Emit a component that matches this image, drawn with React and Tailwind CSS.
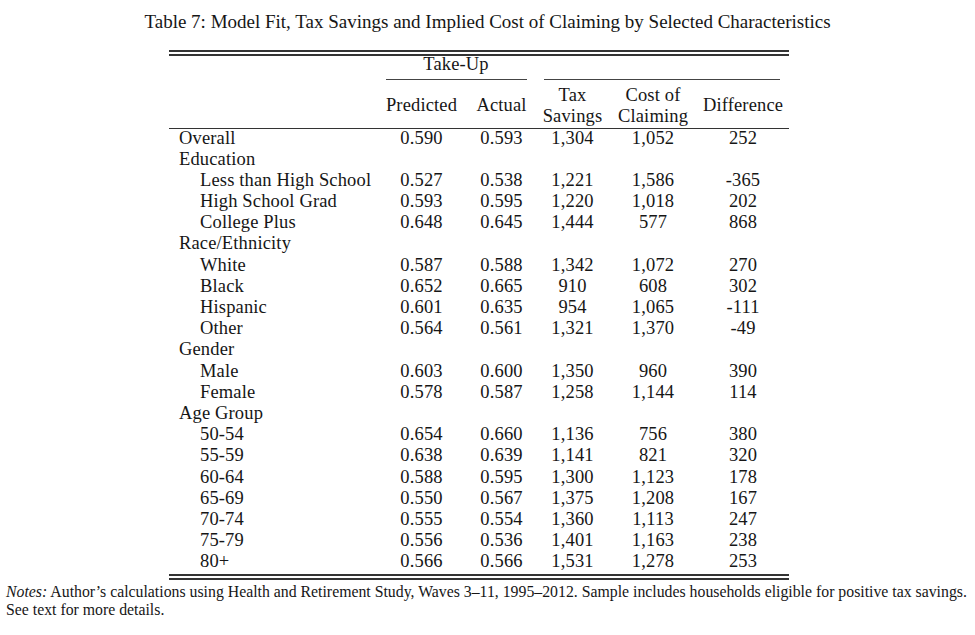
const rows = [
  { label: 'Overall', v: ['0.590', '0.593', '1,304', '1,052', '252'] },
  { label: 'Education' },
  { label: 'Less than High School', sub: true, v: ['0.527', '0.538', '1,221', '1,586', '-365'] },
  { label: 'High School Grad', sub: true, v: ['0.593', '0.595', '1,220', '1,018', '202'] },
  { label: 'College Plus', sub: true, v: ['0.648', '0.645', '1,444', '577', '868'] },
  { label: 'Race/Ethnicity' },
  { label: 'White', sub: true, v: ['0.587', '0.588', '1,342', '1,072', '270'] },
  { label: 'Black', sub: true, v: ['0.652', '0.665', '910', '608', '302'] },
  { label: 'Hispanic', sub: true, v: ['0.601', '0.635', '954', '1,065', '-111'] },
  { label: 'Other', sub: true, v: ['0.564', '0.561', '1,321', '1,370', '-49'] },
  { label: 'Gender' },
  { label: 'Male', sub: true, v: ['0.603', '0.600', '1,350', '960', '390'] },
  { label: 'Female', sub: true, v: ['0.578', '0.587', '1,258', '1,144', '114'] },
  { label: 'Age Group' },
  { label: '50-54', sub: true, v: ['0.654', '0.660', '1,136', '756', '380'] },
  { label: '55-59', sub: true, v: ['0.638', '0.639', '1,141', '821', '320'] },
  { label: '60-64', sub: true, v: ['0.588', '0.595', '1,300', '1,123', '178'] },
  { label: '65-69', sub: true, v: ['0.550', '0.567', '1,375', '1,208', '167'] },
  { label: '70-74', sub: true, v: ['0.555', '0.554', '1,360', '1,113', '247'] },
  { label: '75-79', sub: true, v: ['0.556', '0.536', '1,401', '1,163', '238'] },
  { label: '80+', sub: true, v: ['0.566', '0.566', '1,531', '1,278', '253'] },
];

const cols = 'grid grid-cols-[207px_91px_69px_73px_88px_92px]';

function App() {
  return (
    <div className="w-[975px] h-[635px] bg-white text-[#161616] font-['Liberation_Serif',serif] overflow-hidden">
      {/* Caption */}
      <div className="pt-[12px] h-[50px] text-center text-[19px] leading-[20px]">
        Table 7: Model Fit, Tax Savings and Implied Cost of Claiming by Selected Characteristics
      </div>

      {/* Table */}
      <div className="ml-[169px] w-[620px] text-[18.5px] tracking-[0.15px]">
        <div className="h-[1.5px] bg-[#333]" />
        <div className="h-[2.5px]" />
        <div className="h-[1.5px] bg-[#333]" />

        {/* Header row 1 */}
        <div className={`${cols} h-[23px] leading-[17px]`}>
          <div />
          <div className="col-span-2 text-center">Take-Up</div>
        </div>
        <div className={`${cols} h-px`}>
          <div />
          <div className="col-span-2 ml-[10px] mr-[9px] bg-[#444]" />
          <div className="col-span-3 ml-[8px] mr-[9px] bg-[#444]" />
        </div>

        {/* Header row 2 */}
        <div className={`${cols} h-[48px] pt-[4px] leading-[21px] items-center`}>
          <div />
          <div className="text-center">Predicted</div>
          <div className="text-center">Actual</div>
          <div className="text-center">Tax<br />Savings</div>
          <div className="text-center">Cost of<br />Claiming</div>
          <div className="text-center">Difference</div>
        </div>
        <div className="h-[1.5px] bg-[#333]" />

        {/* Body */}
        <div className="pt-[0.5px]">
          {rows.map((r) => (
            <div key={r.label} className={`${cols} h-[21.2px] leading-[16px]`}>
              <div className={r.sub ? 'pl-[31px]' : 'pl-[10px]'}>{r.label}</div>
              {(r.v || ['', '', '', '', '']).map((x, i) => (
                <div key={i} className="text-center">{x}</div>
              ))}
            </div>
          ))}
        </div>

        <div className="h-[1.5px] bg-[#333]" />
        <div className="h-[2.5px]" />
        <div className="h-[1.5px] bg-[#333]" />
      </div>

      {/* Notes */}
      <div className="pl-[6px] pt-[3px] text-[15.8px] leading-[18px]">
        <p><span className="italic">Notes:</span> Author’s calculations using Health and Retirement Study, Waves 3–11, 1995–2012. Sample includes households eligible for positive tax savings.</p>
        <p>See text for more details.</p>
      </div>
    </div>
  );
}

export default App;
